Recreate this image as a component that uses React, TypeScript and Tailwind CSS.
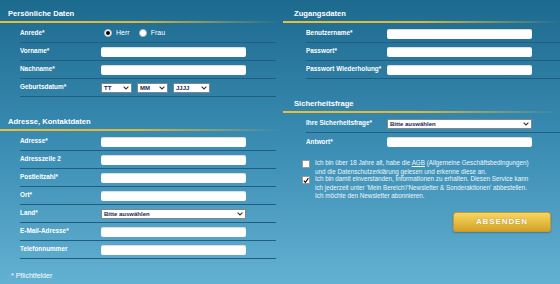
import React from "react";

const font = { fontFamily: '"Liberation Sans", Arial, sans-serif' };

function Header({ title, right }: { title: string; right?: boolean }) {
  return (
    <div>
      <div className={`h-[21px] pt-[9px] ${right ? "pl-[11px]" : "pl-[8px]"}`}>
        <div className="text-[7.6px] leading-[10px] font-bold text-white">{title}</div>
      </div>
      <div className="h-[2px] bg-gradient-to-r from-[#e6c03a] via-[#dcb63e] to-transparent" />
    </div>
  );
}

function Row({ label, children }: { label: string; children?: React.ReactNode }) {
  return (
    <div className="flex items-center h-[18px] border-b border-[#1f5e80]">
      <div className="w-[81px] text-[6.4px] font-bold text-white leading-none">{label}</div>
      {children}
    </div>
  );
}

function Input() {
  return <div className="w-[145px] h-[10px] bg-white rounded-[2px] shadow-[inset_0_1px_1px_rgba(0,0,0,0.15)]" />;
}

function Chevron() {
  return (
    <svg width="6" height="4" viewBox="0 0 6 4" className="shrink-0">
      <path d="M0.6 0.6 L3 3 L5.4 0.6" fill="none" stroke="#333" strokeWidth="1.1" />
    </svg>
  );
}

function Select({ w, text }: { w: number; text: string }) {
  return (
    <div
      className="h-[10px] bg-white border border-[#7d8790] flex items-center justify-between pl-[2px] pr-[2px]"
      style={{ width: w }}
    >
      <span className="text-[6px] font-bold text-[#1b2650] leading-none">{text}</span>
      <Chevron />
    </div>
  );
}

function Radio({ checked }: { checked?: boolean }) {
  return (
    <div className="w-[8px] h-[8px] rounded-full bg-white border border-[#bbb] flex items-center justify-center">
      {checked && <div className="w-[4px] h-[4px] rounded-full bg-black" />}
    </div>
  );
}

function Checkbox({ checked }: { checked?: boolean }) {
  return (
    <div className="w-[8px] h-[8px] bg-white border border-[#999] flex items-center justify-center shrink-0">
      {checked && (
        <svg width="7" height="7" viewBox="0 0 7 7">
          <path d="M1 3.6 L2.8 5.6 L6.3 0.8" fill="none" stroke="#111" strokeWidth="1.4" />
        </svg>
      )}
    </div>
  );
}

export default function App() {
  return (
    <div
      style={font}
      className="w-[560px] h-[284px] overflow-hidden bg-gradient-to-b from-[#1d6a8f] via-[#3a8cb3] to-[#63b1d2] grid grid-cols-[280px_280px]"
    >
      {/* Left column */}
      <div>
        <Header title="Persönliche Daten" />
        <div className="mt-[2px] ml-[20px] mr-[4px]">
          <Row label="Anrede*">
            <div className="flex items-center gap-[4px] ml-[3px] -mt-[1px]">
              <Radio checked />
              <span className="text-[7px] text-white leading-none -mt-[2px]">Herr</span>
              <div className="w-[1px]" />
              <Radio />
              <span className="text-[7px] text-white leading-none -mt-[2px]">Frau</span>
            </div>
          </Row>
          <Row label="Vorname*">
            <Input />
          </Row>
          <Row label="Nachname*">
            <Input />
          </Row>
          <Row label="Geburtsdatum*">
            <div className="flex gap-[5px]">
              <Select w={31} text="TT" />
              <Select w={31} text="MM" />
              <Select w={37} text="JJJJ" />
            </div>
          </Row>
        </div>

        <div className="mt-[11px]">
          <Header title="Adresse, Kontaktdaten" />
        </div>
        <div className="mt-[2px] ml-[20px] mr-[4px]">
          <Row label="Adresse*">
            <Input />
          </Row>
          <Row label="Adresszeile 2">
            <Input />
          </Row>
          <Row label="Postleitzahl*">
            <Input />
          </Row>
          <Row label="Ort*">
            <Input />
          </Row>
          <Row label="Land*">
            <Select w={145} text="Bitte auswählen" />
          </Row>
          <Row label="E-Mail-Adresse*">
            <Input />
          </Row>
          <Row label="Telefonnummer">
            <Input />
          </Row>
        </div>
        <div className="mt-[13px] ml-[11px] text-[7px] text-white leading-[8px]">* Pflichtfelder</div>
      </div>

      {/* Right column */}
      <div className="pl-[3px]">
        <Header title="Zugangsdaten" right />
        <div className="mt-[2px] ml-[23px]">
          <Row label="Benutzername*">
            <Input />
          </Row>
          <Row label="Passwort*">
            <Input />
          </Row>
          <Row label="Passwort Wiederholung*">
            <Input />
          </Row>
        </div>

        <div className="mt-[11px]">
          <Header title="Sicherheitsfrage" right />
        </div>
        <div className="mt-[2px] ml-[23px]">
          <Row label="Ihre Sicherheitsfrage*">
            <Select w={145} text="Bitte auswählen" />
          </Row>
          <div className="flex items-center h-[18px]">
            <div className="w-[81px] text-[6.4px] font-bold text-white leading-none">Antwort*</div>
            <Input />
          </div>
        </div>

        <div className="mt-[9px] ml-[19px] flex flex-col gap-[0px]">
          <div className="flex gap-[5px]">
            <Checkbox />
            <div className="text-[6.3px] leading-[8.5px] text-[#eef6fa] whitespace-nowrap -mt-[1px]">
              Ich bin über 18 Jahre alt, habe die <span className="underline">AGB</span> (Allgemeine Geschäftsbedingungen)
              <br />
              und die Datenschutzerklärung gelesen und erkenne diese an.
            </div>
          </div>
          <div className="flex gap-[5px]">
            <Checkbox checked />
            <div className="text-[6.3px] leading-[8.5px] text-[#eef6fa] whitespace-nowrap -mt-[1px]">
              Ich bin damit einverstanden, Informationen zu erhalten. Diesen Service kann
              <br />
              ich jederzeit unter 'Mein Bereich'/'Newsletter &amp; Sonderaktionen' abbestellen.
              <br />
              Ich möchte den Newsletter abonnieren.
            </div>
          </div>
        </div>

        <div className="flex justify-end mr-[9px] mt-[11px]">
          <div className="w-[98px] h-[20px] rounded-[3px] border border-[#c9992a] bg-gradient-to-b from-[#f4d664] via-[#e6bd42] to-[#d3a22a] shadow-[0_1px_2px_rgba(0,0,0,0.25)] flex items-center justify-center">
            <span className="text-[8px] font-bold text-white tracking-[0.9px] [text-shadow:0_0_1px_rgba(120,80,0,0.6)]">
              ABSENDEN
            </span>
          </div>
        </div>
      </div>
    </div>
  );
}
